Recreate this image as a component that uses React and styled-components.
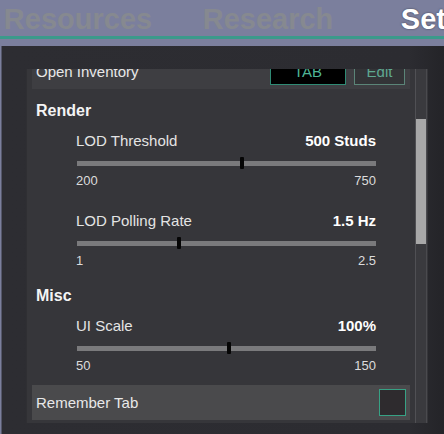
import React from "react";
import styled, { createGlobalStyle } from "styled-components";

const Global = createGlobalStyle`
  html, body { margin: 0; padding: 0; }
  body {
    background: #7b7f9d;
    overflow: hidden;
    font-family: "Liberation Sans", Arial, sans-serif;
  }
`;

const Page = styled.div`
  width: 444px;
  height: 434px;
  display: flex;
  flex-direction: column;
  overflow: hidden;
`;

const Header = styled.div`
  height: 36px;
  flex: none;
  border-bottom: 3px solid #3b9a8b;
  display: flex;
  overflow: hidden;
`;

const TabStrip = styled.div`
  display: flex;
  margin-left: -17px;
`;

const Tab = styled.div`
  width: 190px;
  flex: none;
  text-align: center;
  font-size: 29px;
  font-weight: bold;
  line-height: 38px;
  white-space: nowrap;
  color: ${(p) => (p.$active ? "#ffffff" : "#868990")};
  text-shadow: ${(p) =>
    p.$active ? "0 0 2px rgba(30,30,40,0.7)" : "none"};
`;

const Outer = styled.div`
  flex: 1;
  margin-top: 7px;
  margin-left: 1px;
  border-left: 1px solid #55576a;
  background: linear-gradient(90deg, #2d2d32 0%, #2c2c31 92%, #242428 100%);
  padding: 23px 16px 11px 24px;
  display: flex;
  min-height: 0;
`;

const Inner = styled.div`
  flex: 1;
  display: flex;
  background: #36363a;
  border-left: 1px solid #2f2f33;
  min-height: 0;
`;

const Viewport = styled.div`
  flex: 1;
  overflow: hidden;
  padding: 0 5px 0 5px;
`;

const Content = styled.div`
  margin-top: -15px;
  display: flex;
  flex-direction: column;
`;

const Row = styled.div`
  height: 35px;
  display: flex;
  align-items: center;
  justify-content: space-between;
  padding: 0 4px;
  background: ${(p) => (p.$hover ? "#4a4a4c" : "#3e3e42")};
  margin-top: ${(p) => p.$mt || 0}px;
  font-size: 15px;
  color: #e8e8e8;
`;

const ButtonGroup = styled.div`
  display: flex;
  gap: 8px;
  padding-right: 1px;
`;

const KeyButton = styled.div`
  width: ${(p) => p.$w}px;
  height: 26px;
  box-sizing: border-box;
  display: flex;
  align-items: center;
  justify-content: center;
  font-size: 15px;
  background: ${(p) => (p.$dark ? "#000" : "#333437")};
  border: 1px solid ${(p) => (p.$dark ? "#2f8a74" : "#5b8578")};
  color: ${(p) => (p.$dark ? "#4fb596" : "#5fa891")};
`;

const Checkbox = styled.div`
  width: 27px;
  height: 27px;
  box-sizing: border-box;
  border: 1px solid #37a184;
  background: #2e2b2e;
`;

const Section = styled.div`
  margin-top: ${(p) => p.$mt}px;
  display: flex;
  flex-direction: column;
`;

const SectionTitle = styled.div`
  font-size: 16px;
  font-weight: bold;
  line-height: 20px;
  color: #f4f4f4;
  padding-left: 4px;
`;

const SliderList = styled.div`
  display: flex;
  flex-direction: column;
  gap: 23px;
  margin-top: 11px;
  padding: 0 34px 0 44px;
`;

const SliderItem = styled.div`
  display: flex;
  flex-direction: column;
`;

const LabelRow = styled.div`
  display: flex;
  justify-content: space-between;
  font-size: 15px;
  line-height: 18px;
  color: #e4e4e4;
`;

const Value = styled.span`
  font-weight: bold;
  color: #ffffff;
`;

const TrackWrap = styled.div`
  position: relative;
  height: 12px;
  margin-top: 7px;
  margin-left: 1px;
  display: flex;
  align-items: center;
`;

const Track = styled.div`
  flex: 1;
  height: 5px;
  background: #7a7a7c;
`;

const Thumb = styled.div`
  position: absolute;
  top: 0;
  width: 4px;
  height: 12px;
  background: #050505;
  border-radius: 1px;
`;

const RangeRow = styled.div`
  display: flex;
  justify-content: space-between;
  font-size: 13px;
  line-height: 16px;
  margin-top: 4px;
  color: #dcdcdc;
`;

const ScrollTrack = styled.div`
  width: 10px;
  flex: none;
  margin-right: 1px;
  background: #3a3a3e;
  border-left: 1px solid #505054;
  border-right: 1px solid #4a4a4e;
`;

const ScrollThumb = styled.div`
  margin-top: 50px;
  height: 125px;
  background: #a8a8a8;
`;

const Slider = ({ label, value, min, max, frac }) => (
  <SliderItem>
    <LabelRow>
      <span>{label}</span>
      <Value>{value}</Value>
    </LabelRow>
    <TrackWrap>
      <Track />
      <Thumb style={{ left: `${frac * 100}%` }} />
    </TrackWrap>
    <RangeRow>
      <span>{min}</span>
      <span>{max}</span>
    </RangeRow>
  </SliderItem>
);

export default function App() {
  return (
    <>
      <Global />
      <Page>
        <Header>
          <TabStrip>
            <Tab>Resources</Tab>
            <Tab>Research</Tab>
            <Tab $active>Settings</Tab>
          </TabStrip>
        </Header>
        <Outer>
          <Inner>
            <Viewport>
              <Content>
                <Row>
                  <span>Open Inventory</span>
                  <ButtonGroup>
                    <KeyButton $w={76} $dark>TAB</KeyButton>
                    <KeyButton $w={51}>Edit</KeyButton>
                  </ButtonGroup>
                </Row>
                <Section $mt={12}>
                  <SectionTitle>Render</SectionTitle>
                  <SliderList>
                    <Slider label="LOD Threshold" value="500 Studs" min="200" max="750" frac={300 / 550} />
                    <Slider label="LOD Polling Rate" value="1.5 Hz" min="1" max="2.5" frac={1 / 3} />
                  </SliderList>
                </Section>
                <Section $mt={17}>
                  <SectionTitle>Misc</SectionTitle>
                  <SliderList>
                    <Slider label="UI Scale" value="100%" min="50" max="150" frac={0.5} />
                  </SliderList>
                </Section>
                <Row $hover $mt={11}>
                  <span>Remember Tab</span>
                  <Checkbox />
                </Row>
              </Content>
            </Viewport>
            <ScrollTrack>
              <ScrollThumb />
            </ScrollTrack>
          </Inner>
        </Outer>
      </Page>
    </>
  );
}
